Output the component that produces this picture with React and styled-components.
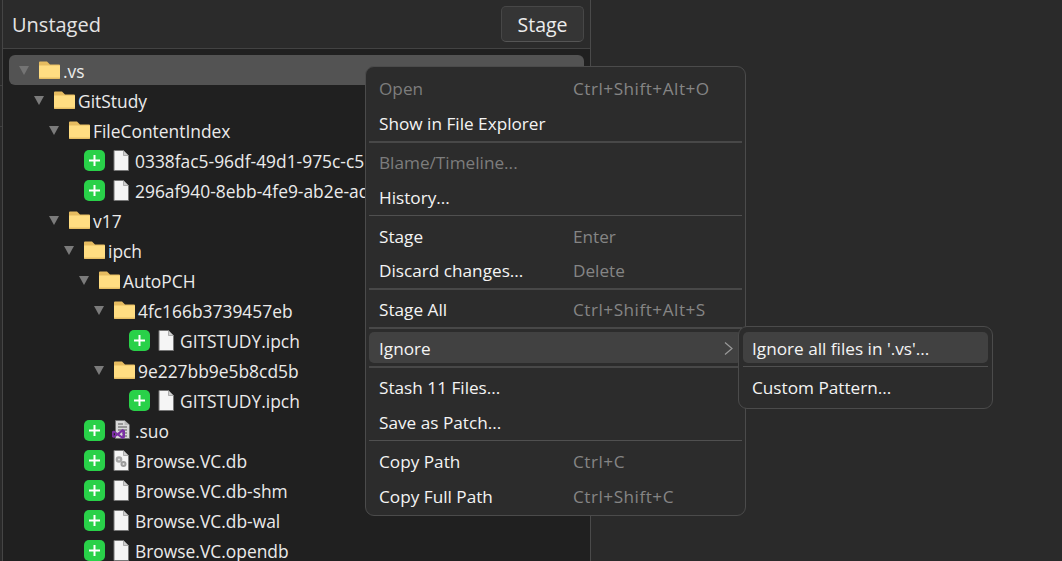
import React from "react";
import styled, { createGlobalStyle } from "styled-components";

const GlobalStyle = createGlobalStyle`
  html, body {
    margin: 0;
    padding: 0;
    background: #2a2a2a;
  }
  * {
    box-sizing: border-box;
  }
`;

const Window = styled.div`
  position: relative;
  display: flex;
  width: 1062px;
  height: 561px;
  overflow: hidden;
  background: #2a2a2a;
  font-family: "Open Sans", "Noto Sans", sans-serif;
`;

const EdgeStrip = styled.div`
  width: 3px;
  flex: none;
  border-right: 1px solid #454545;
  display: flex;
  flex-direction: column;
  padding-top: 85px;
  gap: 40px;
`;

const EdgeMark = styled.div`
  height: 1px;
  background: #3f3f3f;
`;

const Panel = styled.div`
  width: 588px;
  flex: none;
  display: flex;
  flex-direction: column;
  border-right: 1px solid #4a4a4a;
  background: #202020;
`;

const PanelHeader = styled.div`
  height: 49px;
  flex: none;
  display: flex;
  align-items: center;
  justify-content: space-between;
  padding: 0 6px 1px 9px;
  background: #2b2b2b;
  border-bottom: 1px solid #434343;
`;

const PanelTitle = styled.div`
  font-size: 20px;
  padding-top: 2px;
  color: #e4e4e4;
`;

const StageButton = styled.button`
  width: 83px;
  height: 36px;
  padding: 2px 0 0;
  font: inherit;
  font-size: 19.500px;
  color: #ececec;
  background: #353535;
  border: 1px solid #474747;
  border-bottom-color: #555;
  border-radius: 5px;
`;

const Tree = styled.div`
  flex: 1;
  overflow: hidden;
  padding: 6px 6px 0;
`;

const Row = styled.div`
  height: 30px;
  display: flex;
  align-items: center;
  padding-left: ${(p) => 10 + p.$level * 15 + (p.$file ? 20 : 0)}px;
  border-radius: 6px;
  background: ${(p) => (p.$selected ? "#535353" : "transparent")};
  white-space: nowrap;
  overflow: hidden;
`;

const Caret = styled.svg`
  width: 10px;
  height: 9px;
  flex: none;
  margin-right: 10px;
  fill: ${(p) => (p.$selected ? "#747474" : "#7b7b7b")};
`;

const FolderGlyph = styled.svg`
  width: 21px;
  height: 18px;
  flex: none;
  margin-right: 3px;
`;

const AddBadge = styled.span`
  width: 21px;
  height: 21px;
  flex: none;
  margin-right: 8px;
  display: flex;
  align-items: center;
  justify-content: center;
  border-radius: 5px;
  background: #29d149;
`;

const PlusGlyph = styled.svg`
  width: 11px;
  height: 11px;
`;

const PageGlyph = styled.svg`
  width: 16px;
  height: 21px;
  flex: none;
  margin-right: 6px;
  overflow: visible;
`;

const RowLabel = styled.span`
  font-size: 17.400px;
  line-height: 22px;
  color: #ebebeb;
  position: relative;
  top: 1px;
`;

const Menu = styled.div`
  position: absolute;
  left: 365px;
  top: 66px;
  width: 381px;
  height: 450px;
  display: flex;
  flex-direction: column;
  padding: 2.800px 3px;
  background: #2c2c2c;
  border: 1px solid #4b4b4b;
  border-radius: 9px;
`;

const SubMenu = styled(Menu)`
  left: 738px;
  top: 326px;
  width: 255px;
  height: 83px;
  padding: 3px 4px;
`;

const MenuItem = styled.div`
  height: 30.900px;
  flex: none;
  margin: 2px 0;
  display: flex;
  align-items: center;
  padding-top: 2.500px;
  padding-left: ${(p) => (p.$sub ? 9 : 10)}px;
  border-radius: 5px;
  font-size: 17.200px;
  color: ${(p) => (p.$disabled ? "#7d7d7d" : "#f4f4f4")};
  background: ${(p) => (p.$active ? "#414141" : "transparent")};
  white-space: nowrap;
`;

const ItemLabel = styled.span`
  width: 194px;
  flex: none;
`;

const Shortcut = styled.span`
  color: #858585;
  letter-spacing: ${(p) => (p.$chord ? 0.5 : 0)}px;
`;

const Chevron = styled.svg`
  width: 10px;
  height: 13px;
  margin-left: auto;
  margin-right: 8px;
`;

const Separator = styled.div`
  height: 4px;
  flex: none;
  display: flex;
  align-items: center;
  &::after {
    content: "";
    flex: 1;
    height: ${(p) => (p.$thick ? 2 : 1)}px;
    background: ${(p) => (p.$thick ? "#484848" : "#505050")};
  }
`;

const Caretdown = ({ selected }) => (
  <Caret viewBox="0 0 10 9" $selected={selected}>
    <path d="M0 0H10L5 9Z" />
  </Caret>
);

const Folder = () => (
  <FolderGlyph viewBox="0 0 21 18">
    <path d="M0 1.500a1 1 0 0 1 1-1h7l3 3h9a1 1 0 0 1 1 1V7H0Z" fill="#e6bc60" />
    <path d="M0 4.500h21V17a1 1 0 0 1-1 1H1a1 1 0 0 1-1-1Z" fill="#ffdd82" />
    <path d="M0 17.200h21" stroke="#d9ae56" strokeWidth="1" />
  </FolderGlyph>
);

const Plus = () => (
  <AddBadge>
    <PlusGlyph viewBox="0 0 11 11">
      <path d="M4.500 0h2v4.500H11v2H6.500V11h-2V6.500H0v-2h4.500Z" fill="#fff" />
    </PlusGlyph>
  </AddBadge>
);

const Page = ({ kind }) => {
  if (kind === "vs") {
    return (
      <PageGlyph viewBox="0 0 16 21">
        <path d="M2.500 .5h9L16.500 5V18.500H2.500Z" fill="#d8d8d8" stroke="#6f6f6f" />
        <path d="M11.500 .5V5H16.500Z" fill="#b9b9b9" />
        <path d="M5 4h5M5 7h9M5 10h9M9 13h5M9 16h5" stroke="#555" strokeWidth="1.200" />
        <path
          fillRule="evenodd"
          d="M-1 11.500L1 10.500 4.500 13 9.500 9 12 10.500V17.500L9.500 19 4.500 15.500 1 18-1 17ZM.8 12.800V15.800L2.800 14.200ZM9.500 11.800L6.500 14.200 9.500 16.400Z"
          fill="#7b2ea6"
        />
      </PageGlyph>
    );
  }
  return (
    <PageGlyph viewBox="0 0 16 21">
      <path d="M1 .5h9.500L15.500 5.500V20.500H1Z" fill="#f5f5f5" stroke="#777" strokeWidth="1" />
      <path d="M10.500 .5V5.500H15.500Z" fill="#cfcfcf" stroke="#888" strokeWidth=".6" />
      {kind === "settings" && (
        <g fill="#a8a8a8">
          <circle cx="6" cy="9.500" r="3.300" />
          <circle cx="10.500" cy="14" r="3" fill="#9b9b9b" />
          <circle cx="6" cy="9.500" r="1.100" fill="#dedede" />
          <circle cx="10.500" cy="14" r="1" fill="#dedede" />
        </g>
      )}
    </PageGlyph>
  );
};

const treeRows = [
  { level: 0, name: ".vs", folder: true, selected: true },
  { level: 1, name: "GitStudy", folder: true },
  { level: 2, name: "FileContentIndex", folder: true },
  { level: 3, name: "0338fac5-96df-49d1-975c-c5" },
  { level: 3, name: "296af940-8ebb-4fe9-ab2e-ad" },
  { level: 2, name: "v17", folder: true },
  { level: 3, name: "ipch", folder: true },
  { level: 4, name: "AutoPCH", folder: true },
  { level: 5, name: "4fc166b3739457eb", folder: true },
  { level: 6, name: "GITSTUDY.ipch" },
  { level: 5, name: "9e227bb9e5b8cd5b", folder: true },
  { level: 6, name: "GITSTUDY.ipch" },
  { level: 3, name: ".suo", kind: "vs" },
  { level: 3, name: "Browse.VC.db", kind: "settings" },
  { level: 3, name: "Browse.VC.db-shm" },
  { level: 3, name: "Browse.VC.db-wal" },
  { level: 3, name: "Browse.VC.opendb" },
];

const menuItems = [
  { label: "Open", shortcut: "Ctrl+Shift+Alt+O", disabled: true },
  { label: "Show in File Explorer" },
  { sep: true, thick: true },
  { label: "Blame/Timeline...", disabled: true },
  { label: "History..." },
  { sep: true },
  { label: "Stage", shortcut: "Enter" },
  { label: "Discard changes...", shortcut: "Delete" },
  { sep: true, thick: true },
  { label: "Stage All", shortcut: "Ctrl+Shift+Alt+S" },
  { sep: true, thick: true },
  { label: "Ignore", active: true, submenu: true },
  { sep: true, thick: true },
  { label: "Stash 11 Files..." },
  { label: "Save as Patch..." },
  { sep: true },
  { label: "Copy Path", shortcut: "Ctrl+C" },
  { label: "Copy Full Path", shortcut: "Ctrl+Shift+C" },
];

export default function App() {
  return (
    <Window>
      <GlobalStyle />
      <EdgeStrip>
        <EdgeMark />
        <EdgeMark />
      </EdgeStrip>
      <Panel>
        <PanelHeader>
          <PanelTitle>Unstaged</PanelTitle>
          <StageButton>Stage</StageButton>
        </PanelHeader>
        <Tree>
          {treeRows.map((row, index) => (
            <Row
              key={index}
              $level={row.level}
              $file={!row.folder}
              $selected={row.selected}
            >
              {row.folder ? (
                <>
                  <Caretdown selected={row.selected} />
                  <Folder />
                </>
              ) : (
                <>
                  <Plus />
                  <Page kind={row.kind} />
                </>
              )}
              <RowLabel>{row.name}</RowLabel>
            </Row>
          ))}
        </Tree>
      </Panel>

      <Menu>
        {menuItems.map((item, index) =>
          item.sep ? (
            <Separator key={index} $thick={item.thick} />
          ) : (
            <MenuItem key={index} $disabled={item.disabled} $active={item.active}>
              <ItemLabel>{item.label}</ItemLabel>
              {item.shortcut && (
                <Shortcut $chord={item.shortcut.includes("+")}>{item.shortcut}</Shortcut>
              )}
              {item.submenu && (
                <Chevron viewBox="0 0 10 13">
                  <path d="M1 .5L8 6.500 1 12.500" fill="none" stroke="#9a9a9a" strokeWidth="1.200" />
                </Chevron>
              )}
            </MenuItem>
          )
        )}
      </Menu>
      <SubMenu>
        <MenuItem $sub $active>Ignore all files in '.vs'...</MenuItem>
        <Separator />
        <MenuItem $sub>Custom Pattern...</MenuItem>
      </SubMenu>
    </Window>
  );
}
